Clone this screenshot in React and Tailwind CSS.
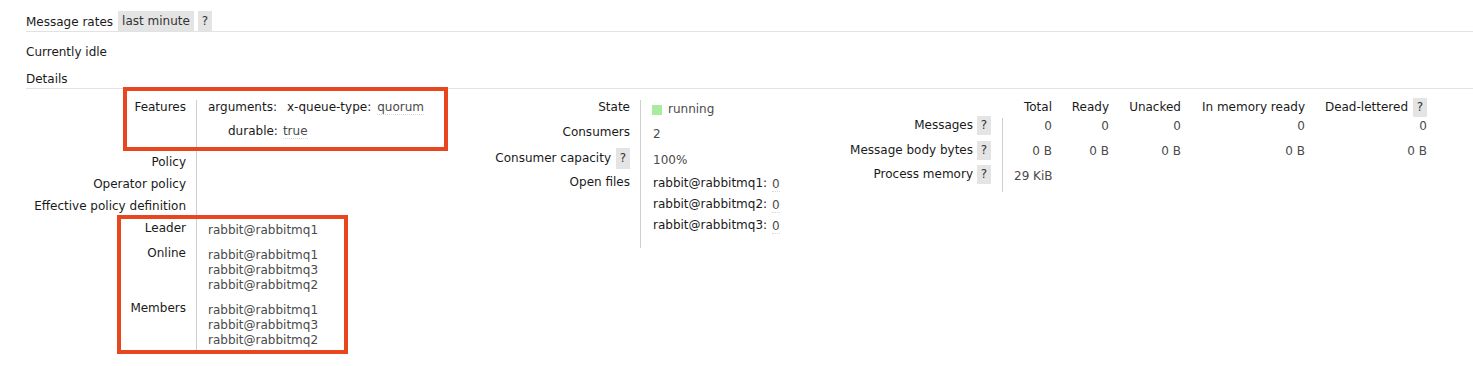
import React from "react";

const Help = ({ tall = false }) => (
  <span
    className={
      tall
        ? "inline-flex h-[21px] w-[14px] shrink-0 items-center justify-center bg-[#e4e4e4] text-[#333]"
        : "inline-flex h-[19px] w-[14px] shrink-0 items-center justify-center bg-[#e4e4e4] text-[#333]"
    }
  >
    ?
  </span>
);

const Val = ({ children }) => (
  <span className="text-[#4a4a4a] border-b border-dotted border-[#d8d8d8]">{children}</span>
);

const nodes = ["rabbit@rabbitmq1", "rabbit@rabbitmq3", "rabbit@rabbitmq2"];

const App = () => {
  return (
    <div className="relative w-[1473px] h-[366px] overflow-hidden bg-white font-['DejaVu_Sans',Verdana,sans-serif] text-[12px] leading-[15px] text-[#1a1a1a]">
      <div className="pl-[26px]">
        {/* message rates header */}
        <div className="flex items-center pt-[11px] border-b border-[#e2e2e2]">
          <span className="h-[20px] pt-[1px] leading-[20px]">Message rates</span>
          <span className="ml-[5px] h-[20px] pt-[1px] leading-[19px] px-[4px] bg-[#e4e4e4] text-[#333]">last minute</span>
          <span className="ml-[4px] h-[20px] pt-[1px] leading-[19px] w-[14px] text-center bg-[#e4e4e4] text-[#333]">?</span>
        </div>
        <div className="mt-[13px]">Currently idle</div>
        <div className="mt-[12px] pb-[1px] border-b border-[#e2e2e2]">Details</div>

        <div className="flex mt-[11px]">
          {/* left table */}
          <div className="w-[424px] grid grid-cols-[171px_1fr]">
            <div className="h-[51px] pr-[10px] text-right border-r border-[#cfcfcf]">Features</div>
            <div className="pl-[11px]">
              <div className="flex">
                <span>arguments:</span>
                <span className="ml-[10px]">x-queue-type:</span>
                <span className="ml-[6px]"><Val>quorum</Val></span>
              </div>
              <div className="flex mt-[9px] pl-[20px]">
                <span>durable:</span>
                <span className="ml-[5px]"><Val>true</Val></span>
              </div>
            </div>

            <div className="h-[22px] pt-[4px] pr-[10px] text-right border-r border-[#cfcfcf]">Policy</div>
            <div />
            <div className="h-[22px] pt-[4px] pr-[10px] text-right border-r border-[#cfcfcf]">Operator policy</div>
            <div />
            <div className="h-[22px] pt-[4px] pr-[10px] text-right border-r border-[#cfcfcf]">Effective policy definition</div>
            <div />

            <div className="h-[22px] pt-[4px] pr-[10px] text-right border-r border-[#cfcfcf]">Leader</div>
            <div className="pt-[6px] pl-[11px] text-[#4a4a4a]">rabbit@rabbitmq1</div>

            <div className="h-[55px] pt-[7px] pr-[10px] text-right border-r border-[#cfcfcf]">Online</div>
            <div className="pt-[9px] pl-[11px] text-[#4a4a4a]">
              {nodes.map((n) => (
                <div key={n}>{n}</div>
              ))}
            </div>

            <div className="h-[58px] pt-[7px] pr-[10px] text-right border-r border-[#cfcfcf]">Members</div>
            <div className="pt-[9px] pl-[11px] text-[#4a4a4a]">
              {nodes.map((n) => (
                <div key={n}>{n}</div>
              ))}
            </div>
          </div>

          {/* middle table */}
          <div className="w-[390px] grid grid-cols-[191px_1fr] content-start">
            <div className="h-[25px] pr-[10px] text-right border-r border-[#cfcfcf]">State</div>
            <div className="pl-[11px] pt-[2px] flex items-start">
              <span className="mt-[3px] w-[10px] h-[10px] bg-[#a8ec9e]" />
              <span className="ml-[6px] text-[#4a4a4a]">running</span>
            </div>

            <div className="h-[26px] pr-[10px] text-right border-r border-[#cfcfcf]">Consumers</div>
            <div className="pl-[12px] pt-[2px] text-[#4a4a4a]">2</div>

            <div className="h-[24px] pr-[10px] border-r border-[#cfcfcf]">
              <div className="h-[15px] flex items-center justify-end">
                <span>Consumer capacity</span>
                <span className="ml-[5px] flex"><Help tall /></span>
              </div>
            </div>
            <div className="pl-[12px] pt-[2px] text-[#4a4a4a]">100%</div>

            <div className="h-[73px] pr-[10px] text-right border-r border-[#cfcfcf]">Open files</div>
            <div className="pl-[12px] pt-[1px]">
              {["rabbit@rabbitmq1", "rabbit@rabbitmq2", "rabbit@rabbitmq3"].map((n) => (
                <div key={n} className="h-[21px] flex">
                  <span>{n}:</span>
                  <span className="ml-[5px] mt-[1px]"><Val>0</Val></span>
                </div>
              ))}
            </div>
          </div>

          {/* right table */}
          <div className="grid grid-cols-[163px_49px_57px_72px_124px_122px] content-start">
            <div className="h-[18px]" />
            <div className="text-right">Total</div>
            <div className="text-right">Ready</div>
            <div className="text-right">Unacked</div>
            <div className="text-right">In memory ready</div>
            <div className="flex justify-end">
              <div className="h-[15px] flex items-center">
                <span>Dead-lettered</span>
                <span className="ml-[5px] flex"><Help /></span>
              </div>
            </div>

            <div className="h-[25px] pr-[11px] border-r border-[#cfcfcf]">
              <div className="h-[15px] flex items-center justify-end">
                <span>Messages</span>
                <span className="ml-[4px] flex"><Help /></span>
              </div>
            </div>
            <div className="pt-[1px] text-right text-[#4a4a4a]">0</div>
            <div className="pt-[1px] text-right text-[#4a4a4a]">0</div>
            <div className="pt-[1px] text-right text-[#4a4a4a]">0</div>
            <div className="pt-[1px] text-right text-[#4a4a4a]">0</div>
            <div className="pt-[1px] text-right text-[#4a4a4a]">0</div>

            <div className="h-[24px] pr-[11px] border-r border-[#cfcfcf]">
              <div className="h-[15px] flex items-center justify-end">
                <span>Message body bytes</span>
                <span className="ml-[4px] flex"><Help /></span>
              </div>
            </div>
            <div className="pt-[1px] text-right text-[#4a4a4a]">0 B</div>
            <div className="pt-[1px] text-right text-[#4a4a4a]">0 B</div>
            <div className="pt-[1px] text-right text-[#4a4a4a]">0 B</div>
            <div className="pt-[1px] text-right text-[#4a4a4a]">0 B</div>
            <div className="pt-[1px] text-right text-[#4a4a4a]">0 B</div>

            <div className="h-[25px] pr-[11px] border-r border-[#cfcfcf]">
              <div className="h-[15px] flex items-center justify-end">
                <span>Process memory</span>
                <span className="ml-[4px] flex"><Help /></span>
              </div>
            </div>
            <div className="pt-[2px] pl-[11px] col-span-5 text-[#4a4a4a]">29 KiB</div>
          </div>
        </div>
      </div>

      {/* annotation boxes */}
      <div className="absolute left-[123px] top-[87px] w-[325px] h-[64px] border-[4px] border-[#e8461e]" />
      <div className="absolute left-[117px] top-[215px] w-[231px] h-[139px] border-[4px] border-[#e8461e]" />
    </div>
  );
};

export default App;
